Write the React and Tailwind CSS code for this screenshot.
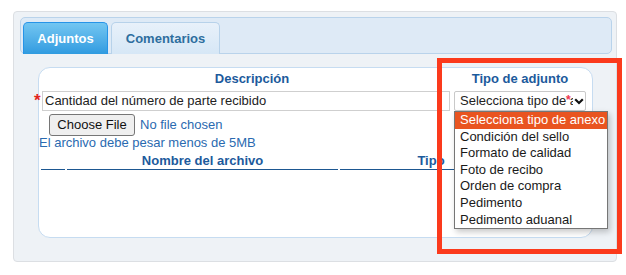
import React from "react";

const options = [
  "Selecciona tipo de anexo",
  "Condición del sello",
  "Formato de calidad",
  "Foto de recibo",
  "Orden de compra",
  "Pedimento",
  "Pedimento aduanal",
];

function Chevron() {
  return (
    <svg width="10" height="7" viewBox="0 0 10 7" className="block">
      <path d="M1.2 1.3 L5 5 L8.8 1.3" fill="none" stroke="#111" strokeWidth="2.2" />
    </svg>
  );
}

export default function App() {
  return (
    <div className="relative w-[626px] h-[275px] overflow-hidden bg-white font-['Liberation_Sans',Arial,sans-serif] text-[13px]">
      <div className="ml-[13px] mt-[11px] h-[251px] w-[604px] rounded-[4px] border border-[#dcdfe3] bg-[#eef2f6] pl-[6px] pt-[5px]">
        {/* tab strip */}
        <div className="flex h-[37px] w-[592px] items-end gap-[3px] rounded-[5px] border border-[#b9d3eb] bg-[#deeaf6] pl-[2px]">
          <div className="-mb-px flex h-[32px] w-[85px] items-center justify-center rounded-t-[5px] border border-b-0 border-[#2694e8] bg-gradient-to-b from-[#72c6f1] to-[#2f9be0] font-bold text-white">
            Adjuntos
          </div>
          <div className="-mb-px flex h-[32px] w-[109px] items-center justify-center rounded-t-[5px] border border-b-0 border-[#b7d2ea] bg-gradient-to-b from-[#e8f1fa] to-[#d6e7f6] font-bold text-[#2e6e9e]">
            Comentarios
          </div>
        </div>

        {/* content card */}
        <div className="ml-[18px] mt-[13px] h-[171px] w-[555px] rounded-[12px] border border-[#c6dcf1] bg-white">
          <div className="flex pt-[3px] font-bold leading-[16px] text-[#1c5a9c]">
            <div className="ml-[9px] w-[408px] text-center">Descripción</div>
            <div className="-ml-[2px] w-[132px] text-center">Tipo de adjunto</div>
          </div>

          <div className="-ml-[6px] mt-[4px] flex items-center">
            <span className="w-[9px] pl-[1px] text-[17px] font-bold leading-[20px] text-[#e3241c]">*</span>
            <div className="h-[20px] w-[408px] border border-[#cfcfcf] pl-[2px] leading-[18px] text-[#222]">
              Cantidad del número de parte recibido
            </div>
            <div className="relative ml-[4px] flex h-[20px] w-[132px] items-center rounded-[2px] border border-[#c9c9c9] pl-[5px] text-[#222]">
              <span className="w-[113px] overflow-hidden whitespace-nowrap leading-[18px]">Selecciona tipo de anexo</span>
              <span className="absolute left-[111px] top-[1px] text-[12px] font-bold leading-[14px] text-[#ee3552]">*</span>
              <span className="ml-[1px]">
                <Chevron />
              </span>

              {/* open option list */}
              <div className="absolute left-[-1px] top-[calc(100%+1px)] z-10 w-[154px] border border-[#767676] bg-white shadow-[2px_3px_6px_rgba(0,0,0,0.22)]">
                {options.map((o, i) => (
                  <div
                    key={o}
                    className={`h-[16.6px] pl-[5px] leading-[16.6px] whitespace-nowrap ${
                      i === 0 ? "bg-[#e95420] text-white" : "text-[#1a1a1a]"
                    }`}
                  >
                    {o}
                  </div>
                ))}
              </div>
            </div>
          </div>

          <div className="ml-[10px] mt-[3px] flex items-center">
            <div className="flex h-[22px] w-[86px] items-center justify-center rounded-[3px] border border-[#767676] bg-[#efefef] text-[#111]">
              Choose File
            </div>
            <span className="ml-[5px] text-[#2a6ab0]">No file chosen</span>
          </div>

          <div className="leading-[14px] text-[#2a6ab0]">El archivo debe pesar menos de 5MB</div>

          <div className="ml-[2px] flex gap-[2px] font-bold leading-[15px] text-[#1c5a9c]">
            <div className="w-[24px] border-b border-[#1d5791] pb-[1px] pt-[3px]">&nbsp;</div>
            <div className="w-[271px] border-b border-[#1d5791] pb-[1px] pt-[3px] text-center">Nombre del archivo</div>
            <div className="w-[182px] border-b border-[#1d5791] pb-[1px] pt-[3px] text-center">Tipo</div>
            <div className="w-[60px] border-b border-[#1d5791] pb-[1px] pt-[3px]">&nbsp;</div>
          </div>
        </div>
      </div>

      {/* annotation box */}
      <div className="absolute left-[437px] top-[58px] z-20 h-[196px] w-[185px] border-[5px] border-[#fb3a1c]" />
    </div>
  );
}
